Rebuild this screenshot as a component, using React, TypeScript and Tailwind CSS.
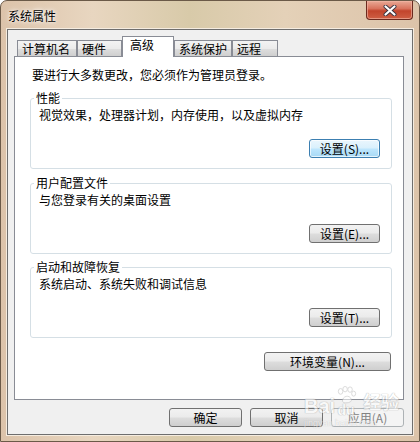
const font = "font-['Noto_Sans_CJK_SC','Noto_Sans',sans-serif]";

type BtnProps = { label: string; w: string; focus?: boolean; disabled?: boolean };

const WinButton = ({ label, w, focus, disabled }: BtnProps) => {
  let cls =
    'border-[#707070] text-black bg-[linear-gradient(#f2f2f2_0%,#ebebeb_48%,#dddddd_52%,#cfcfcf_100%)]';
  if (focus)
    cls =
      'border-[#3c7fb1] text-black bg-[linear-gradient(#eaf6fd_0%,#d9f0fc_48%,#bee6fd_52%,#a7d9f5_100%)] shadow-[inset_0_0_0_1px_#ffffffb0]';
  if (disabled) cls = 'border-[#adb2b5] text-[#838383] bg-[#f4f4f4]';
  return (
    <div
      className={`${w} h-[19px] flex items-center justify-center rounded-[3px] border text-[12px] leading-[14px] ${cls}`}
    >
      {label}
    </div>
  );
};

const tabs = [
  { label: '计算机名', w: 'w-[60px]' },
  { label: '硬件', w: 'w-[45px]' },
  { label: '高级', w: 'w-[52px]', active: true },
  { label: '系统保护', w: 'w-[58px]' },
  { label: '远程', w: 'w-[46px]' },
];

const groups = [
  { title: '性能', desc: '视觉效果，处理器计划，内存使用，以及虚拟内存', btn: '设置(S)...', focus: true, mt: 'mt-[9px]' },
  { title: '用户配置文件', desc: '与您登录有关的桌面设置', btn: '设置(E)...', mt: 'mt-[7px]' },
  { title: '启动和故障恢复', desc: '系统启动、系统失败和调试信息', btn: '设置(T)...', mt: 'mt-[6px]' },
];

export default function App() {
  return (
    <div
      className={`${font} relative w-[420px] h-[442px] overflow-hidden rounded-t-[7px] border border-[#6b5a48] bg-[linear-gradient(90deg,#dcc3aa_0%,#e8d6c0_22%,#d8caa9_45%,#e4d1b8_68%,#dcc3a9_100%)] text-black`}
    >
      {/* Title bar */}
      <div className="h-[28px] flex items-start">
        <span className="pl-[7px] pt-[8px] text-[12px] leading-[14px] [text-shadow:0_0_6px_#ffffff,0_0_3px_#ffffff]">
          系统属性
        </span>
        <div className="ml-auto mr-[6px] w-[47px] h-[19px] rounded-b-[4px] border border-t-0 border-[#6b2a1f] bg-[linear-gradient(#e9a996_0%,#d8735d_42%,#c2442c_55%,#cf5f44_100%)] shadow-[inset_0_0_0_1px_#f2b7a6a0] flex items-center justify-center">
          <svg width="14" height="11" viewBox="0 0 14 11">
            <path d="M2.5 1.5 L11.5 9.5 M11.5 1.5 L2.5 9.5" stroke="#3a3440" strokeWidth="4" strokeLinecap="round" />
            <path d="M2.5 1.5 L11.5 9.5 M11.5 1.5 L2.5 9.5" stroke="#ffffff" strokeWidth="2.2" strokeLinecap="round" />
          </svg>
        </div>
      </div>

      {/* Client area */}
      <div className="mx-[6px] h-[406px] border border-[#6e6e6e] bg-[#f0f0f0] shadow-[0_0_0_1px_#f5ece0] flex flex-col pl-[6px] pr-[8px] pt-[6px]">
        {/* Tabs */}
        <div className="h-[20px] flex items-end pl-[3px]">
          {tabs.map((t) =>
            t.active ? (
              <div
                key={t.label}
                className={`${t.w} h-[21px] -mb-[1px] relative z-10 border border-b-0 border-[#898c95] bg-white pl-[7px] pt-[1px] text-[12px] leading-[14px]`}
              >
                {t.label}
              </div>
            ) : (
              <div
                key={t.label}
                className={`${t.w} h-[16px] border border-b-0 border-[#898c95] bg-[linear-gradient(#f3f3f3_0%,#ebebeb_50%,#dddddd_55%,#cfcfcf_100%)] pl-[4px] pt-[1px] text-[12px] leading-[14px]`}
              >
                {t.label}
              </div>
            )
          )}
        </div>

        {/* Tab panel */}
        <div className="h-[344px] border border-[#898c95] bg-white pt-[11px] pl-[15px] pr-[11px] flex flex-col">
          <div className="pl-[2px] text-[12px] leading-[14px]">要进行大多数更改，您必须作为管理员登录。</div>

          {groups.map((g) => (
            <fieldset
              key={g.title}
              className={`${g.mt} border border-[#d5dfe5] rounded-[3px] pl-[3px] pr-[11px] pb-[10px]`}
            >
              <legend className="px-[2px] text-[12px] leading-[14px]">{g.title}</legend>
              <div className="mt-[3px] pl-[5px] text-[12px] leading-[14px]">{g.desc}</div>
              <div className="mt-[17px] flex justify-end">
                <WinButton label={g.btn} w="w-[71px]" focus={g.focus} />
              </div>
            </fieldset>
          ))}

          <div className="mt-[14px] pr-[1px] flex justify-end">
            <WinButton label="环境变量(N)..." w="w-[127px]" />
          </div>
        </div>

        {/* Dialog buttons */}
        <div className="mt-[8px] flex justify-end gap-[8px]">
          <WinButton label="确定" w="w-[73px]" />
          <WinButton label="取消" w="w-[73px]" />
          <WinButton label="应用(A)" w="w-[73px]" disabled />
        </div>
      </div>

      {/* Baidu watermark */}
      <div className="absolute left-[303px] top-[385px] flex flex-col opacity-55 pointer-events-none">
        <div className="flex items-end">
          <span className="text-[20px] leading-[20px] font-bold text-white [text-shadow:0_0_1px_#8a8a8a,0_0_1px_#8a8a8a] font-['Liberation_Sans',sans-serif]">
            Bai
          </span>
          <div className="flex flex-col items-center">
            <svg width="22" height="18" viewBox="0 0 24 20">
              <g fill="#ffffff" stroke="#b8b8b8" strokeWidth="1">
                <ellipse cx="6" cy="6" rx="2.5" ry="3.2" />
                <ellipse cx="11" cy="3.5" rx="2.5" ry="3" />
                <ellipse cx="16.5" cy="4" rx="2.5" ry="3" />
                <ellipse cx="20.5" cy="8.5" rx="2.2" ry="2.8" />
                <path d="M8 17 C8 11 16 9 18 15 C19 19 9 20 8 17 Z" />
              </g>
            </svg>
            <span className="text-[14px] leading-[12px] font-bold text-white [text-shadow:0_0_1px_#8a8a8a,0_0_1px_#8a8a8a] font-['Liberation_Sans',sans-serif]">
              du
            </span>
          </div>
          <span className="ml-[6px] mb-[6px] text-[18px] leading-[18px] font-bold text-white [text-shadow:0_0_1px_#8a8a8a,0_0_1px_#8a8a8a]">
            经验
          </span>
        </div>
        <div className="mt-[2px] text-[9px] leading-[10px] text-white [text-shadow:0_0_1px_#8a8a8a] font-['Liberation_Sans',sans-serif]">
          jingyan.baidu.com
        </div>
      </div>
    </div>
  );
}
